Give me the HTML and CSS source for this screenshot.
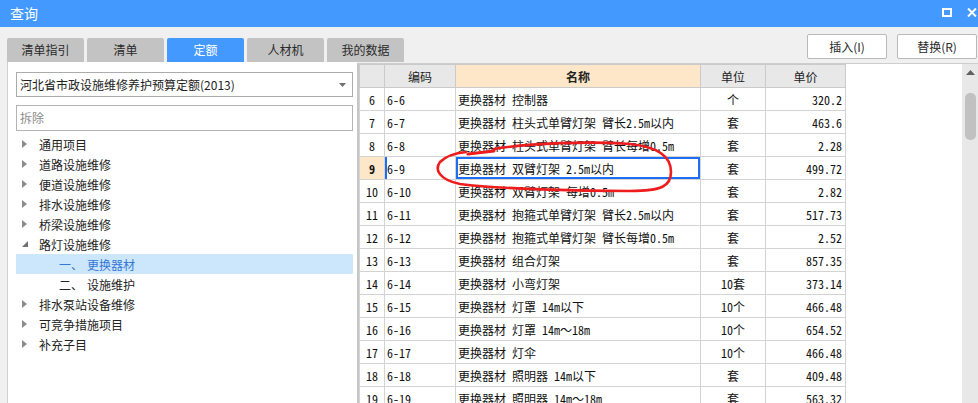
FILE: index.html
```html
<!DOCTYPE html>
<html lang="zh-CN">
<head>
<meta charset="utf-8">
<title>查询</title>
<link rel="stylesheet" href="styles.css">
</head>
<body>
<div class="window">
  <div class="titlebar">
    <span class="title">查询</span>
    <div class="winctl">
      <svg class="ico" width="10" height="9" viewBox="0 0 10 9"><rect x="1" y="1" width="8" height="7" fill="none" stroke="#fff" stroke-width="2"/></svg>
      <svg class="ico" width="10" height="9" viewBox="0 0 10 9"><path d="M1 0.5L9 8.5M9 0.5L1 8.5" stroke="#fff" stroke-width="2"/></svg>
    </div>
  </div>
  <div class="toolbar">
    <div class="tabs">
      <div class="tab">清单指引</div>
      <div class="tab">清单</div>
      <div class="tab active">定额</div>
      <div class="tab">人材机</div>
      <div class="tab">我的数据</div>
    </div>
    <div class="actions">
      <button class="btn">插入(I)</button>
      <button class="btn">替换(R)</button>
    </div>
  </div>
  <div class="content">
    <div class="leftpane">
      <div class="select"><span>河北省市政设施维修养护预算定额(2013)</span><svg class="caret" width="7" height="4" viewBox="0 0 7 4"><path d="M0 0H7L3.5 4Z" fill="#707070"/></svg></div>
      <div class="search">拆除</div>
      <ul class="tree">
        <li class="node"><span class="tw"><svg width="5" height="8" viewBox="0 0 5 8"><path d="M0 0L5 4L0 8Z" fill="#8c8c8c"/></svg></span>通用项目</li>
        <li class="node"><span class="tw"><svg width="5" height="8" viewBox="0 0 5 8"><path d="M0 0L5 4L0 8Z" fill="#8c8c8c"/></svg></span>道路设施维修</li>
        <li class="node"><span class="tw"><svg width="5" height="8" viewBox="0 0 5 8"><path d="M0 0L5 4L0 8Z" fill="#8c8c8c"/></svg></span>便道设施维修</li>
        <li class="node"><span class="tw"><svg width="5" height="8" viewBox="0 0 5 8"><path d="M0 0L5 4L0 8Z" fill="#8c8c8c"/></svg></span>排水设施维修</li>
        <li class="node"><span class="tw"><svg width="5" height="8" viewBox="0 0 5 8"><path d="M0 0L5 4L0 8Z" fill="#8c8c8c"/></svg></span>桥梁设施维修</li>
        <li class="node"><span class="tw"><svg width="6" height="6" viewBox="0 0 6 6"><path d="M6 0V6H0Z" fill="#707070"/></svg></span>路灯设施维修</li>
        <li class="node sub selected"><span class="num">一、</span>更换器材</li>
        <li class="node sub"><span class="num">二、</span>设施维护</li>
        <li class="node"><span class="tw"><svg width="5" height="8" viewBox="0 0 5 8"><path d="M0 0L5 4L0 8Z" fill="#8c8c8c"/></svg></span>排水泵站设备维修</li>
        <li class="node"><span class="tw"><svg width="5" height="8" viewBox="0 0 5 8"><path d="M0 0L5 4L0 8Z" fill="#8c8c8c"/></svg></span>可竞争措施项目</li>
        <li class="node"><span class="tw"><svg width="5" height="8" viewBox="0 0 5 8"><path d="M0 0L5 4L0 8Z" fill="#8c8c8c"/></svg></span>补充子目</li>
      </ul>
    </div>
    <div class="gridpane">
      <div class="gridwrap">
        <table class="grid">
          <colgroup><col class="c-no"><col class="c-code"><col class="c-name"><col class="c-unit"><col class="c-price"></colgroup>
          <thead>
            <tr><th></th><th>编码</th><th class="hl">名称</th><th>单位</th><th>单价</th></tr>
          </thead>
          <tbody>
            <tr><td class="no">6</td><td>6-6</td><td>更换器材 控制器</td><td class="u">个</td><td class="p">320.2</td></tr>
            <tr><td class="no">7</td><td>6-7</td><td>更换器材 柱头式单臂灯架 臂长2.5m以内</td><td class="u">套</td><td class="p">463.6</td></tr>
            <tr><td class="no">8</td><td>6-8</td><td>更换器材 柱头式单臂灯架 臂长每增0.5m</td><td class="u">套</td><td class="p">2.28</td></tr>
            <tr class="cur"><td class="no">9</td><td class="code">6-9</td><td class="name">更换器材 双臂灯架 2.5m以内</td><td class="u">套</td><td class="p">499.72</td></tr>
            <tr><td class="no">10</td><td>6-10</td><td>更换器材 双臂灯架 每增0.5m</td><td class="u">套</td><td class="p">2.82</td></tr>
            <tr><td class="no">11</td><td>6-11</td><td>更换器材 抱箍式单臂灯架 臂长2.5m以内</td><td class="u">套</td><td class="p">517.73</td></tr>
            <tr><td class="no">12</td><td>6-12</td><td>更换器材 抱箍式单臂灯架 臂长每增0.5m</td><td class="u">套</td><td class="p">2.52</td></tr>
            <tr><td class="no">13</td><td>6-13</td><td>更换器材 组合灯架</td><td class="u">套</td><td class="p">857.35</td></tr>
            <tr><td class="no">14</td><td>6-14</td><td>更换器材 小弯灯架</td><td class="u">10套</td><td class="p">373.14</td></tr>
            <tr><td class="no">15</td><td>6-15</td><td>更换器材 灯罩 14m以下</td><td class="u">10个</td><td class="p">466.48</td></tr>
            <tr><td class="no">16</td><td>6-16</td><td>更换器材 灯罩 14m～18m</td><td class="u">10个</td><td class="p">654.52</td></tr>
            <tr><td class="no">17</td><td>6-17</td><td>更换器材 灯伞</td><td class="u">10个</td><td class="p">466.48</td></tr>
            <tr><td class="no">18</td><td>6-18</td><td>更换器材 照明器 14m以下</td><td class="u">套</td><td class="p">409.48</td></tr>
            <tr><td class="no">19</td><td>6-19</td><td>更换器材 照明器 14m～18m</td><td class="u">套</td><td class="p">563.32</td></tr>
          </tbody>
        </table>
      </div>
      <div class="vscroll">
        <svg class="up" width="9" height="5" viewBox="0 0 9 5"><path d="M0 5L4.5 0L9 5Z" fill="#606060"/></svg>
        <div class="thumb"></div>
      </div>
    </div>
  </div>
  <svg class="annot" width="978" height="403" viewBox="0 0 978 403">
    <path d="M468 154 L494 151" fill="none" stroke="#ee1c1c" stroke-width="3" stroke-linecap="round"/>
    <path d="M494 149 C530 143 590 141 630 144 C660 147 671 158 671 172 C671 186 662 191 630 191 C580 191 500 189 460 184 C440 180 434 170 440 162 C446 156 456 153 466 152" fill="none" stroke="#ee1c1c" stroke-width="2.6" stroke-linecap="round"/>
  </svg>
</div>
</body>
</html>
```

FILE: styles.css
```css
* { box-sizing: border-box; }
html, body { margin: 0; padding: 0; }
body {
  width: 978px;
  height: 403px;
  overflow: hidden;
  background: #f0f0f0;
  font-family: "Noto Sans CJK SC", "Noto Sans", sans-serif;
  font-size: 12px;
  color: #222;
}
.window {
  position: relative;
  width: 978px;
  height: 403px;
  display: flex;
  flex-direction: column;
}
.titlebar {
  height: 27px;
  flex: none;
  background: #4499ff;
  color: #fff;
  display: flex;
  align-items: center;
  justify-content: space-between;
  padding: 0 1px 0 10px;
}
.title { font-size: 14px; line-height: 27px; }
.winctl { display: flex; align-items: center; gap: 15px; margin-top: -2px; }
.ico { display: block; }

.toolbar {
  height: 35px;
  flex: none;
  display: flex;
  justify-content: space-between;
}
.tabs {
  align-self: flex-end;
  display: flex;
  gap: 3px;
  padding-left: 7px;
}
.tab {
  width: 77px;
  height: 24px;
  line-height: 24px;
  text-align: center;
  background: #c3c3c3;
  color: #2a2a2a;
  border-radius: 2px 2px 0 0;
  font-size: 12px;
}
.tab.active { background: #4499ff; color: #fff; }
.actions {
  align-self: flex-start;
  margin-top: 7px;
  padding-right: 1px;
  display: flex;
  gap: 10px;
}
.btn {
  width: 80px;
  height: 25px;
  background: #fff;
  border: 1px solid #b9b9b9;
  border-radius: 2px;
  font-family: inherit;
  font-size: 12px;
  color: #2a2a2a;
  padding: 0;
}

.content {
  flex: 1;
  display: flex;
  min-height: 0;
}
.leftpane {
  width: 350px;
  margin-left: 7px;
  background: #fff;
  border-left: 1px solid #d0d0d0;
  padding: 10px 4px 0 8px;
  display: flex;
  flex-direction: column;
}
.select {
  height: 25px;
  border: 1px solid #ababab;
  display: flex;
  align-items: center;
  justify-content: space-between;
  padding: 0 6px 0 3px;
  color: #222;
}
.caret { display: block; }
.search {
  margin-top: 8px;
  height: 26px;
  border: 1px solid #b4b4b4;
  line-height: 24px;
  padding-left: 3px;
  color: #8a8a8a;
}
.tree {
  list-style: none;
  margin: 3px 0 0 0;
  padding: 0;
}
.node {
  height: 20px;
  display: flex;
  align-items: center;
  color: #222;
  white-space: nowrap;
}
.tw {
  width: 23px;
  padding-left: 6px;
  display: flex;
  align-items: center;
}
.sub { padding-left: 43px; }
.num { width: 28px; }
.selected { background: #cce6fb; color: #3577d6; }

.gridpane {
  flex: 1;
  display: flex;
  margin-top: 1px;
  border-top: 1px solid #cdcdcd;
  border-left: 2px solid #c6c6c6;
  min-width: 0;
}
.gridwrap {
  flex: 1;
  background: #fff;
  overflow: hidden;
}
.grid {
  border-collapse: collapse;
  table-layout: fixed;
  width: 486px;
}
.c-no { width: 25px; }
.c-code { width: 71px; }
.c-name { width: 245px; }
.c-unit { width: 65px; }
.c-price { width: 80px; }
.grid th, .grid td {
  height: 23px;
  padding: 0 2px;
  border: 1px solid #d3d3d3;
  white-space: nowrap;
  overflow: hidden;
}
.grid th {
  background: #e8e8e8;
  font-weight: normal;
  color: #222;
  font-size: 12px;
  text-align: center;
  border-color: #cacaca;
}
.grid th.hl { background: #fde7c8; font-weight: bold; }
.grid td {
  font-family: "Noto Sans Mono CJK SC", "Liberation Mono", "Noto Sans CJK SC", monospace;
  font-size: 12px;
  color: #111;
}
.grid td.no { text-align: center; padding: 0; }
.grid td.u { text-align: center; }
.grid td.p { text-align: right; padding-right: 3px; }
.cur td.no { background: #fde7c8; font-weight: bold; }
.cur td.code { box-shadow: inset 2px 0 0 #1c6ef2; }
.cur td.name { box-shadow: inset 0 0 0 2px #1c6ef2; }

.vscroll {
  width: 16px;
  flex: none;
  background: #e8e8e8;
  display: flex;
  flex-direction: column;
  align-items: center;
  padding-top: 6px;
}
.up { display: block; }
.thumb {
  margin-top: 18px;
  width: 11px;
  height: 47px;
  border-radius: 5px;
  background: #c1c1c1;
}
.annot {
  position: absolute;
  left: 0;
  top: 0;
  pointer-events: none;
}
```
